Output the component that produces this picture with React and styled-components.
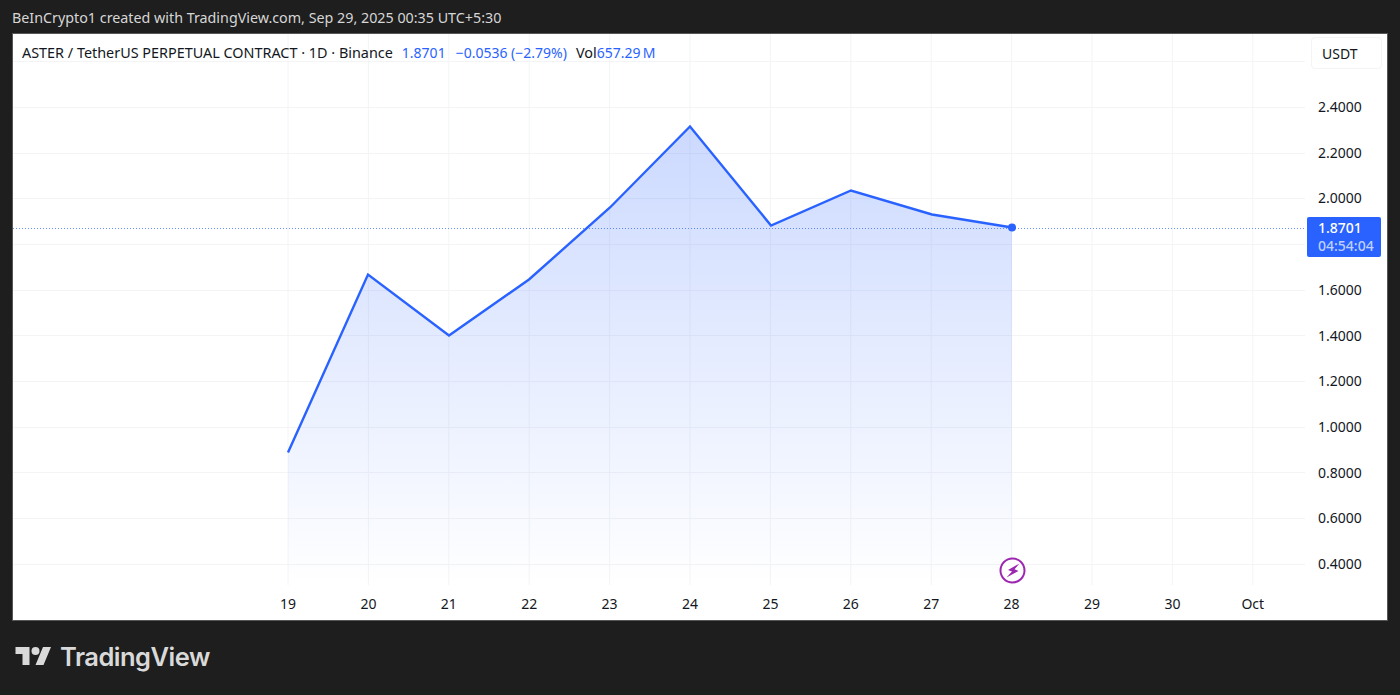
import styled, { createGlobalStyle } from "styled-components";

const GlobalStyle = createGlobalStyle`
    html, body {
        margin: 0;
        padding: 0;
        background: #1e1e1e;
        font-family: "Noto Sans", "Open Sans", sans-serif;
    }
`;

const Page = styled.div`
    width: 1400px;
    height: 695px;
    display: flex;
    flex-direction: column;
    padding: 0 12px;
    box-sizing: border-box;
    background: #1e1e1e;
    overflow: hidden;
`;

const Caption = styled.div`
    height: 33px;
    line-height: 36px;
    color: #d6d6d6;
    font-size: 14.3px;
    white-space: nowrap;
`;

const Panel = styled.div`
    position: relative;
    width: 1376px;
    height: 588px;
    box-sizing: border-box;
    background: #fff;
    border: 1px solid #565656;
`;

const Chart = styled.svg`
    display: block;
    width: 1374px;
    height: 586px;
`;

const Legend = styled.div`
    position: absolute;
    left: 9px;
    top: 9px;
    display: flex;
    font-size: 14.4px;
    line-height: 19px;
    color: #131722;
    white-space: nowrap;
`;

const Value = styled.span`
    color: #2962ff;
    font-size: 14px;
    margin-left: ${(props) => props.$gap || 0}px;
`;

const VolLabel = styled.span`
    margin-left: 9px;
`;

const Unit = styled.div`
    position: absolute;
    right: 5px;
    top: 3px;
    width: 71px;
    height: 32px;
    box-sizing: border-box;
    padding-left: 10px;
    line-height: 32px;
    font-size: 14px;
    color: #131722;
    border: 1px solid #f4f4f6;
    border-radius: 4px;
`;

const PriceTag = styled.div`
    position: absolute;
    right: 6px;
    top: 183px;
    width: 74px;
    height: 40px;
    box-sizing: border-box;
    padding: 2px 0 0 11px;
    background: #2962ff;
    border-radius: 2px;
    font-size: 14px;
    font-weight: 500;
    line-height: 18px;
    color: #fff;
`;

const Countdown = styled.div`
    color: #bfd0ff;
`;

const Footer = styled.div`
    display: flex;
    align-items: center;
    gap: 8px;
    padding: 16px 0 0 3px;
`;

const Wordmark = styled.span`
    font-family: "Inter", "Noto Sans", sans-serif;
    font-weight: 600;
    font-size: 25.5px;
    line-height: 40px;
    letter-spacing: -0.5px;
    color: #d9d9d9;
`;

const dates = ["19", "20", "21", "22", "23", "24", "25", "26", "27", "28", "29", "30", "Oct"];
const prices = ["2.4000", "2.2000", "2.0000", null, "1.6000", "1.4000", "1.2000", "1.0000", "0.8000", "0.6000", "0.4000"];
const line = "288,452.5 368,274.5 449,335.5 529,279.5 610,207.5 690,126.5 771,225.5 851,190.5 932,214.5 1012,227.5";

const App = () => {
    return (
        <Page>
            <GlobalStyle />
            <Caption>BeInCrypto1 created with TradingView.com, Sep 29, 2025 00:35 UTC+5:30</Caption>
            <Panel>
                <Chart viewBox="13 34 1374 586">
                    <defs>
                        <linearGradient id="area" x1="0" y1="126" x2="0" y2="585" gradientUnits="userSpaceOnUse">
                            <stop offset="0" stopColor="#2962ff" stopOpacity="0.24" />
                            <stop offset="1" stopColor="#2962ff" stopOpacity="0" />
                        </linearGradient>
                    </defs>
                    {dates.map((d, i) => (
                        <line key={d} x1={288 + i * 80.4} x2={288 + i * 80.4} y1="34" y2="585" stroke="#f3f4f6" />
                    ))}
                    {[61, 107, 153, 198, 244, 290, 335, 381, 427, 472, 518, 564].map((y) => (
                        <line key={y} x1="13" x2="1305" y1={y + 0.5} y2={y + 0.5} stroke="#f3f4f6" />
                    ))}
                    <polygon points={`288,585 ${line} 1012,585`} fill="url(#area)" />
                    <line x1="13" x2="1305" y1="228.5" y2="228.5" stroke="#2962ff" strokeOpacity="0.7" strokeDasharray="1 2" />
                    <polyline points={line} fill="none" stroke="#2962ff" strokeWidth="2.4" />
                    <circle cx="1012" cy="227.5" r="4" fill="#2962ff" />
                    {dates.map((d, i) => (
                        <text key={d} x={288 + i * 80.4} y="609" textAnchor="middle" fontSize="14" fill="#131722">{d}</text>
                    ))}
                    {prices.map((p, i) => p && (
                        <text key={p} x="1318" y={112 + i * 45.7} fontSize="14" fill="#131722">{p}</text>
                    ))}
                    <circle cx="1012.5" cy="570.5" r="12" fill="#fff" stroke="#9c27b0" strokeWidth="2" />
                    <path d="M1019.5 563.5l-11.5 6.5 4 1.6-5.5 5.9 12-6.6-4-1.7z" fill="#9c27b0" />
                </Chart>
                <Legend>
                    ASTER / TetherUS PERPETUAL CONTRACT · 1D · Binance
                    <Value $gap={9}>1.8701</Value>
                    <Value $gap={10}>−0.0536 (−2.79%)</Value>
                    <VolLabel>Vol</VolLabel>
                    <Value>657.29{"\u2009"}M</Value>
                </Legend>
                <Unit>USDT</Unit>
                <PriceTag>
                    1.8701
                    <Countdown>04:54:04</Countdown>
                </PriceTag>
            </Panel>
            <Footer>
                <svg width="37" height="28" viewBox="0 0 36 28" fill="#d9d9d9">
                    <path d="M14 22H7V11H0V4h14v18zM28 22h-8l7.5-18h8L28 22z" />
                    <circle cx="20" cy="8" r="4" />
                </svg>
                <Wordmark>TradingView</Wordmark>
            </Footer>
        </Page>
    );
};

export default App;
